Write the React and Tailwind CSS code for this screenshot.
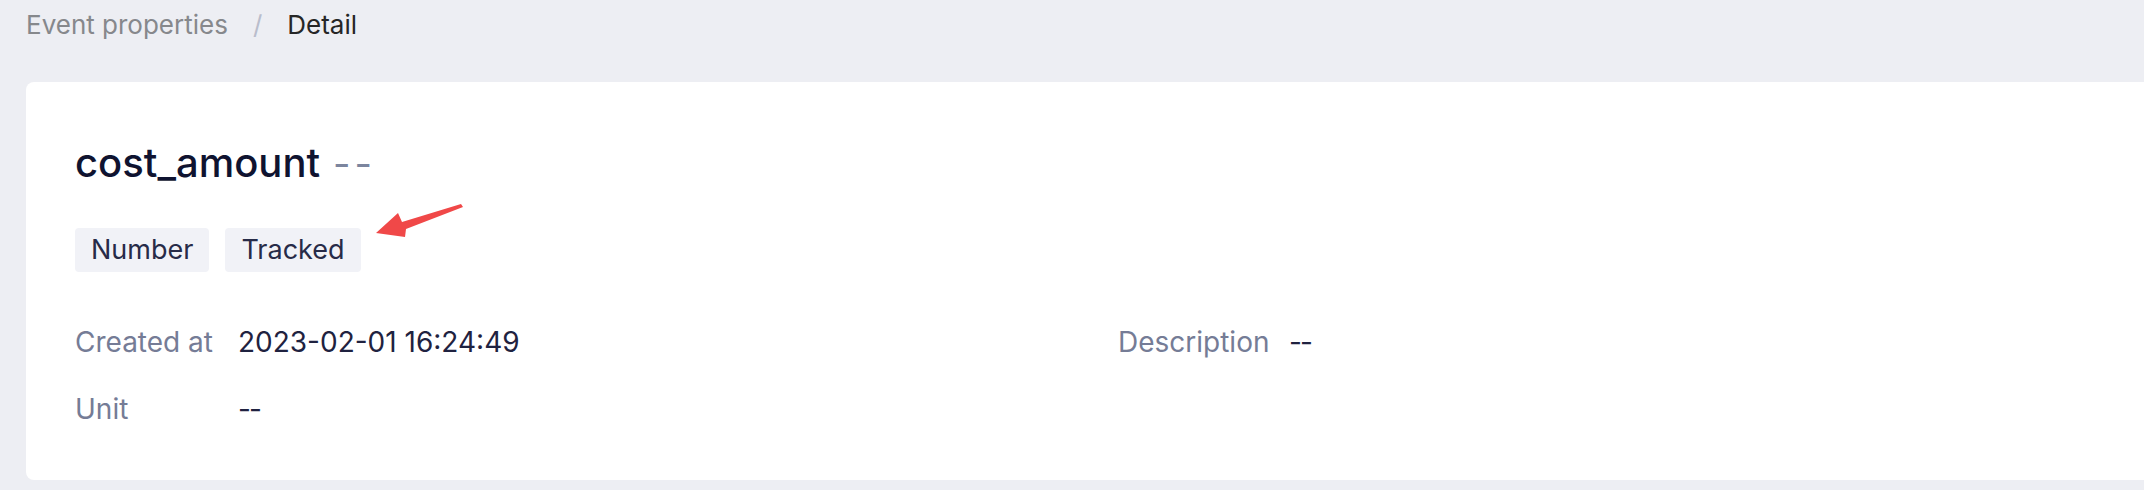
import React from "react";

export default function App() {
  return (
    <div
      className="relative w-full h-[490px] bg-[#edeef3] overflow-hidden"
      style={{ fontFamily: "Inter, 'Noto Sans', sans-serif" }}
    >
      <div className="h-[50px] pl-[26px] flex items-center text-[26px] leading-[36px]">
        <span className="text-[#86888c]">Event properties</span>
        <span className="text-[#b9bdcc] mx-[25px]">/</span>
        <span className="text-[#262626]">Detail</span>
      </div>

      <div className="mt-[32px] ml-[26px] h-[398px] bg-white rounded-l-[8px] pl-[49px] pt-[55px]">
        <div className="flex items-center h-[52px]">
          <span className="text-[40px] leading-[52px] font-medium text-[#0f1330]">cost_amount</span>
          <span className="ml-[13px] text-[38px] leading-[52px] text-[#7c859e] tracking-[4px]">--</span>
        </div>

        <div className="mt-[39px] flex gap-[16px]">
          <span className="h-[44px] px-[16px] flex items-center rounded-[4px] bg-[#f1f2f7] text-[27px] text-[#272b48]">Number</span>
          <span className="h-[44px] px-[16px] flex items-center rounded-[4px] bg-[#f1f2f7] text-[27px] text-[#272b48]">Tracked</span>
        </div>

        <div className="mt-[50px] grid grid-cols-[1043px_1fr] gap-y-[27px] text-[28px] leading-[40px]">
          <div className="flex">
            <span className="w-[163px] text-[#757c96]">Created at</span>
            <span className="text-[#1f2240]">2023-02-01 16:24:49</span>
          </div>
          <div className="flex">
            <span className="w-[171px] text-[#757c96]">Description</span>
            <span className="text-[#1f2240] tracking-[-2px]">--</span>
          </div>
          <div className="flex">
            <span className="w-[163px] text-[#757c96]">Unit</span>
            <span className="text-[#1f2240] tracking-[-2px]">--</span>
          </div>
          <div />
        </div>
      </div>

      <svg
        className="absolute left-[370px] top-[200px]"
        width="100"
        height="45"
        viewBox="370 200 100 45"
      >
        <polygon
          points="376,233 398,213 402,222 461,204 463,207 406,229 405,237"
          fill="#f04848"
        />
      </svg>
    </div>
  );
}
